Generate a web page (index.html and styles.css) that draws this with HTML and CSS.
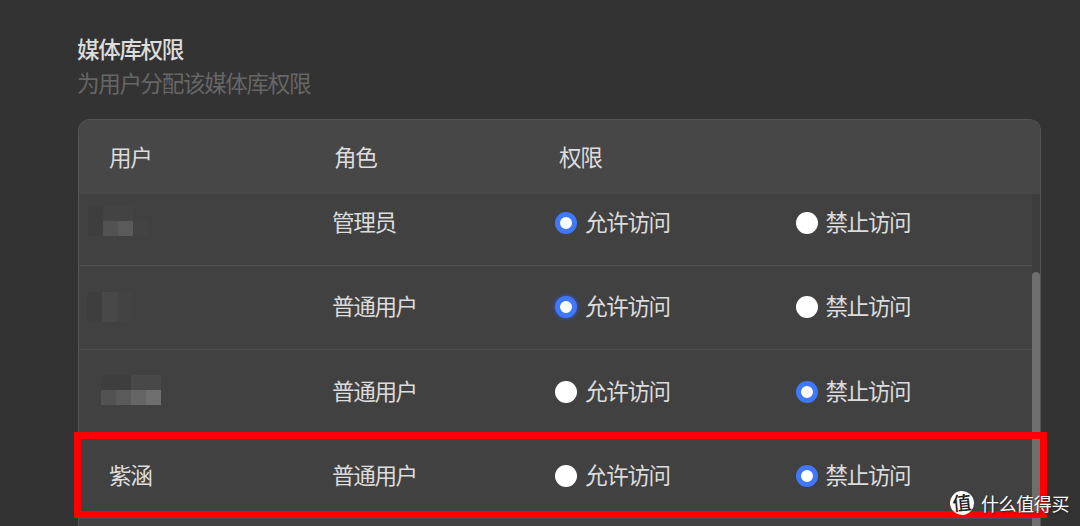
FILE: index.html
```html
<!DOCTYPE html>
<html lang="zh-CN">
  <head>
    <meta charset="UTF-8">
    <title>媒体库权限</title>
    <link rel="stylesheet" href="styles.css">
  </head>
  <body>
    <div class="container">
      <h2 class="title">媒体库权限</h2>
      <p class="subtitle">为用户分配该媒体库权限</p>

      <div class="table">
        <div class="table-header">
          <span>用户</span>
          <span>角色</span>
          <span>权限</span>
        </div>
        <div class="table-body">
          <div class="rows">
            <div class="row">
              <div class="user">
                <div class="mosaic mosaic-1">
                  <i class="c1"></i><i class="c2"></i><i class="c2"></i><i></i>
                  <i class="c1"></i><i class="c4"></i><i class="c5"></i><i class="c2"></i>
                </div>
              </div>
              <div class="role">管理员</div>
              <label class="option"><input type="radio" name="u1" checked><span>允许访问</span></label>
              <label class="option"><input type="radio" name="u1"><span>禁止访问</span></label>
            </div>
            <div class="row">
              <div class="user">
                <div class="mosaic mosaic-2">
                  <i class="c1"></i><i class="c3"></i><i class="c2"></i><i></i>
                  <i class="c1"></i><i class="c3"></i><i class="c2"></i><i></i>
                </div>
              </div>
              <div class="role">普通用户</div>
              <label class="option"><input class="focus" type="radio" name="u2" checked><span>允许访问</span></label>
              <label class="option"><input type="radio" name="u2"><span>禁止访问</span></label>
            </div>
            <div class="row">
              <div class="user">
                <div class="mosaic mosaic-3">
                  <i class="c1"></i><i class="c1"></i><i class="c3"></i><i class="c3"></i>
                  <i class="c4"></i><i class="c5"></i><i class="c6"></i><i class="c7"></i>
                </div>
              </div>
              <div class="role">普通用户</div>
              <label class="option"><input type="radio" name="u3"><span>允许访问</span></label>
              <label class="option"><input type="radio" name="u3" checked><span>禁止访问</span></label>
            </div>
            <div class="row">
              <div class="user"><span>紫涵</span></div>
              <div class="role">普通用户</div>
              <label class="option"><input type="radio" name="u4"><span>允许访问</span></label>
              <label class="option"><input type="radio" name="u4" checked><span>禁止访问</span></label>
            </div>
          </div>
          <div class="scrollbar">
            <div class="thumb"></div>
          </div>
        </div>
      </div>
    </div>

    <div class="highlight"></div>
    <div class="watermark">
      <span class="watermark-logo">值</span>
      <span>什么值得买</span>
    </div>
  </body>
</html>
```
FILE: styles.css
```css
* {
  box-sizing: border-box;
}

body {
  margin: 0;
  height: 526px;
  overflow: hidden;
  position: relative;
  background-color: #333333;
  color: #dcdcdc;
  font-family: "Noto Sans CJK SC", sans-serif;
  font-size: 22.6px;
  font-weight: 400;
  line-height: 34px;
  letter-spacing: -1.4px;
}

.container {
  width: 963px;
  margin-left: 78px;
  padding-top: 32px;
}

.title {
  margin: 0 0 0 -1px;
  font-size: 22.6px;
  font-weight: 500;
}

.subtitle {
  margin: 0 0 19px -1px;
  color: #666666;
}

.table {
  height: 407px;
  border: 1px solid #555555;
  border-bottom: none;
  border-radius: 12px 12px 0 0;
  background-color: #414141;
  overflow: hidden;
}

.table-header {
  display: grid;
  grid-template-columns: 225px 225px 1fr;
  align-items: center;
  height: 74px;
  padding-left: 30px;
  background-color: #474747;
}

.table-body {
  display: flex;
  height: 332px;
  overflow: hidden;
}

/* the list is scrolled a little, so the first row is cut */
.rows {
  flex: 1;
  margin-top: -12.6px;
}

.row {
  display: grid;
  grid-template-columns: 223px 223px 240.5px 1fr;
  align-items: center;
  height: 84.3px;
  padding-left: 30px;
  border-bottom: 1px solid #4e4e4e;
}

.role,
.user span,
.option span {
  display: block;
  padding-bottom: 2px;
}

.option {
  display: flex;
  align-items: center;
  gap: 8px;
}

.option input {
  appearance: none;
  width: 22px;
  height: 22px;
  margin: 0;
  border-radius: 50%;
  background-color: #ffffff;
}

.option input:checked {
  border: 5.5px solid #3f78fb;
}

.option input.focus {
  box-shadow: 0 0 4px #3358e0;
}

.scrollbar {
  width: 8px;
  padding-top: 78px;
  background-color: #3d3d3d;
}

.thumb {
  height: 254px;
  border-radius: 4px 4px 0 0;
  background-color: #6e6e6e;
}

.mosaic {
  display: grid;
  grid-template-columns: repeat(4, 15px);
  grid-auto-rows: 15px;
}

.mosaic-1 {
  margin: -4px 0 0 -21px;
}

.mosaic-2 {
  margin-left: -22px;
}

.mosaic-3 {
  margin: -4px 0 0 -8px;
}

.c1 { background-color: #3e3e3e; }
.c2 { background-color: #434343; }
.c3 { background-color: #484848; }
.c4 { background-color: #525252; }
.c5 { background-color: #5a5a5a; }
.c6 { background-color: #656565; }
.c7 { background-color: #6e6e6e; }

.highlight {
  position: absolute;
  left: 74px;
  top: 432px;
  width: 973px;
  height: 86px;
  border: 7px solid #ff0000;
}

.watermark {
  position: absolute;
  left: 950px;
  top: 491px;
  display: flex;
  align-items: center;
  gap: 7px;
  height: 24px;
  color: #ffffff;
  font-size: 18px;
  line-height: 24px;
  letter-spacing: -0.4px;
  text-shadow: 1px 1px 2px #222222;
}

.watermark-logo {
  width: 24px;
  height: 24px;
  border-radius: 50%;
  background-color: #ffffff;
  color: #222222;
  font-size: 19px;
  font-weight: 500;
  line-height: 22px;
  letter-spacing: 0;
  text-align: center;
  text-shadow: none;
  transform: rotate(-6deg);
}
```
